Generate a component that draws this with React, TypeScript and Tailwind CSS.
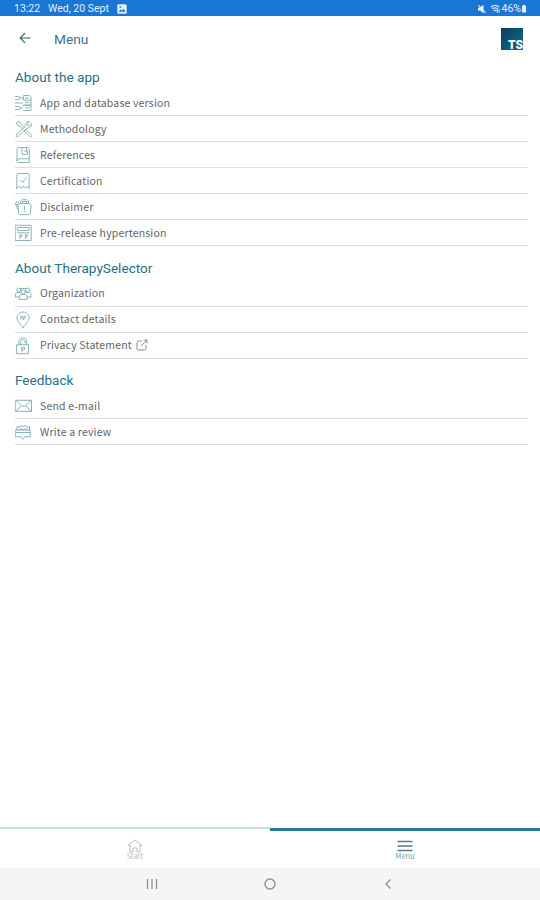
import type { ReactNode } from "react";

type MenuItem = {
  label: string;
  icon: ReactNode;
  external?: boolean;
};

type Section = {
  title: string;
  items: MenuItem[];
};

function Icon({ children }: { children: ReactNode }) {
  return (
    <svg
      viewBox="0 0 18 18"
      className="h-[18px] w-[18px] shrink-0"
      fill="none"
      stroke="#86b0b7"
      strokeWidth="0.95"
      strokeLinecap="round"
      strokeLinejoin="round"
    >
      {children}
    </svg>
  );
}

const sections: Section[] = [
  {
    title: "About the app",
    items: [
      {
        label: "App and database version",
        icon: (
          <Icon>
            <path d="M.5 2.500h3c1 0 1.500.5 1.500 1.500S4.500 5.500 3.500 5.500h-3M5 4h2.500M.5 9H7.500M.5 15.500h3c1 0 1.500-.5 1.500-1.500s-.5-1.500-1.500-1.500h-3M5 14h2.500" />
            <path d="M14 1.500H8.500v4.700H16V3.500zM16 6.200v5H8.500M8.500 11.200H16v5.300H8.500M10.500 4h3M10.500 8.700h3.500M10.500 13.800h3.500" />
          </Icon>
        ),
      },
      {
        label: "Methodology",
        icon: (
          <Icon>
            <path d="M1.300 3 3 1.300l3 1.800.3 1.600 3 3M4.700 6.300 3.100 6 1.300 3M4.700 6.300l3 3M10.200 10.800l1-1 5.200 5.100c1 1-.6 2.600-1.600 1.600L9.600 11.400z" />
            <path d="m1.500 14.800 8.800-8.300c-.5-2.700 1.400-5.200 4.300-4.800l-2.200 2.200.4 1.500 1.600.4L16.700 3.600c.4 2.800-2 4.900-4.700 4.300l-8.800 8.600c-1.300 1-2.800-.5-1.700-1.700z" />
          </Icon>
        ),
      },
      {
        label: "References",
        icon: (
          <Icon>
            <path d="M7 1.500H4c-1.300 0-2 .8-2 2v11c0 1.300.8 2 2 2h10.300v-3.700H4c-1.200 0-2 .6-2 1.700M14.300 12.800V3.300c0-1.200-.6-1.800-1.600-1.800h-1.500" />
            <path d="M7 1.500h4.500V5M7 1.500v6.700h5.500V5H9.500" />
          </Icon>
        ),
      },
      {
        label: "Certification",
        icon: (
          <Icon>
            <path d="M2 2.500c0-.6.4-1 1-1h10.200c.6 0 1 .4 1 1v14L12 14.400 10 16l-1.900-1.700L6.200 16l-2-1.600L2 16.500z" />
            <path d="m5.700 8.300 2 2 3.800-4.500" />
          </Icon>
        ),
      },
      {
        label: "Disclaimer",
        icon: (
          <Icon>
            <path d="M4.200 5.500h10.300l1.500 2-.6 8.200-1.500 1H5.200l-1.500-1-.6-8.200z" />
            <path d="M5.500 5.300V3.200l2-1.500h4l2 1.500v2.100M7.500 5V3.500h4V5M3.500 4H1.500L.5 6l2.200 5M1 6.500h2M9.500 8.500v3.300M9.500 13.800v.2" />
          </Icon>
        ),
      },
      {
        label: "Pre-release hypertension",
        icon: (
          <Icon>
            <path d="M.6 1.300h15.600v15.200H.6zM2.800 3.500h11.200v3H2.800zM2.800 8.800H14" />
            <path d="M5 11v3.500M5 11h2.500M5 12.700h2M10.500 11v3.500M10.500 11H13M10.500 12.700h2" />
          </Icon>
        ),
      },
    ],
  },
  {
    title: "About TherapySelector",
    items: [
      {
        label: "Organization",
        icon: (
          <Icon>
            <circle cx="3.700" cy="5" r="2" />
            <circle cx="12.700" cy="5" r="2" />
            <circle cx="8.200" cy="7" r="2.100" />
            <path d="M4.200 14v-2c0-1.500 1-2.500 2.500-2.500h3c1.500 0 2.500 1 2.500 2.500v2zM4 12H.5V9.500C.5 8 1.500 7.500 2.700 7.500h2.500M12.500 12h3.500V9.500c0-1.500-1-2-2.500-2H11M5.200 3.500h6" />
          </Icon>
        ),
      },
      {
        label: "Contact details",
        icon: (
          <Icon>
            <path d="M8 16.700C6 13.500 2 10.500 2 6.800 2 3.500 4.600 1 8 1s6 2.500 6 5.800c0 3.700-4 6.700-6 9.900z" />
            <path d="M5.800 5.500v2.700M5.800 5.500 8 6.300v2M8 6.300l2.300-1.500v2.500L8 8.300" />
          </Icon>
        ),
      },
      {
        label: "Privacy Statement",
        external: true,
        icon: (
          <Icon>
            <path d="M2 7.700h11.500v9H2zM3.800 7.700V4.500C3.800 2.200 5.500.7 7.700.7s3.900 1.500 3.900 3.800v1.200H9.800V4.500c0-1.300-.8-2-2.100-2s-2 .7-2 2v3.200M11.600 5.700v2" />
            <path d="M7 10.300h2.500v2H7zM7 12.300v2.200" />
          </Icon>
        ),
      },
    ],
  },
  {
    title: "Feedback",
    items: [
      {
        label: "Send e-mail",
        icon: (
          <Icon>
            <path d="M.6 3.300h15.900v11H.6zM.8 3.500l6.300 5.700h2.800l6.400-5.700M.8 14.100l5.500-5M16.300 14.100l-5.500-5" />
          </Icon>
        ),
      },
      {
        label: "Write a review",
        icon: (
          <Icon>
            <path d="M.6 7h14.600v6.800H10L8 16.200l-2-2.400H.6zM.6 9.500h14.600M2 7V3.500l2.500 1L6 2.500l2 1.300 2.500-1.300L12 4.500l2.500-1V7M4.200 7 6 5.500 8 7l2.200-1.500L12.200 7" />
          </Icon>
        ),
      },
    ],
  },
];

function StatusBar() {
  return (
    <div className="flex h-4 items-center bg-[#1976d5] pt-px pr-[13px] pl-[14px] font-[Roboto,sans-serif] text-[10.5px] leading-4 text-[#e4f0ff]">
      <span className="w-[34px]">13:22</span>
      <span className="w-[69px] whitespace-nowrap">Wed, 20 Sept</span>
      <svg viewBox="0 0 10 10" className="h-[10px] w-[10px]" fill="none">
        <rect x=".3" y=".3" width="9.400" height="9.400" rx="1.300" fill="#e4f0ff" />
        <path d="m1.700 7.800 2-2.500 1.500 1.500 1.500-2 1.800 3zM2.500 2.500h2v1.300h-2z" fill="#1976d5" />
      </svg>
      <div className="ml-auto flex items-center">
        <svg viewBox="0 0 10 10" className="mr-[3px] h-[10px] w-[10px]">
          <path d="M1 3.500h2L6.500.7v8.600L3 6.500H1z" fill="#e4f0ff" />
          <path d="m1.500 1 7 7.800" stroke="#e4f0ff" strokeWidth="1.100" />
        </svg>
        <svg viewBox="0 0 12 10" className="mr-px h-[10px] w-[11px]" fill="none" stroke="#d2e5fb" strokeWidth="1.300">
          <path d="M1 3c2.800-2.300 6.500-2.300 9 0M2.500 5c2-1.600 4.300-1.600 6 0M4 7c1-.8 2-.8 3 0M8 5.500v3.700M10 5v3.700" />
        </svg>
        <span>46%</span>
        <svg viewBox="0 0 6 10" className="h-[9px] w-[6px]" fill="#e4f0ff">
          <path d="M2 .8h2V2h1.300v7.500H.7V2H2z" />
        </svg>
      </div>
    </div>
  );
}

function Header() {
  return (
    <header className="flex h-[46px] items-center pr-[17px] pl-[19px]">
      <svg viewBox="0 0 12 12" className="h-3 w-3 -translate-y-px" fill="none" stroke="#35606e" strokeWidth="1.200">
        <path d="M11.500 6H1.200M6 1.200 1.200 6 6 10.800" />
      </svg>
      <h1 className="mt-[2px] ml-[23px] font-[Roboto,sans-serif] text-[13.700px] leading-none text-[#3d7285]">Menu</h1>
      <div className="ml-auto flex h-[22px] w-[22px] items-end justify-end bg-linear-to-br from-[#0d3c5c] to-[#087091]">
        <span className="font-[Roboto,sans-serif] text-[12px] leading-[10px] font-black text-white">TS</span>
      </div>
    </header>
  );
}

function MenuRow({ item }: { item: MenuItem }) {
  return (
    <li className="flex h-[26px] items-center border-b border-[#dcdfe0] pt-px">
      {item.icon}
      <span className="ml-[7px] font-['Noto_Sans_CJK_SC',sans-serif] text-[10.500px] leading-none tracking-[0.17px] text-[#646464]">
        {item.label}
      </span>
      {item.external && (
        <svg viewBox="0 0 12 12" className="ml-1 h-3 w-3 -translate-y-px" fill="none" stroke="#888" strokeWidth="1">
          <path d="M6 2H2.500C1.500 2 1 2.500 1 3.500v6c0 1 .5 1.500 1.500 1.500h6c1 0 1.500-.5 1.500-1.500V6M5 7l6-6M7.500 1H11v3.500" />
        </svg>
      )}
    </li>
  );
}

function BottomNav() {
  return (
    <nav className="flex h-[41px] items-start font-['Noto_Sans_CJK_SC',sans-serif] text-[7.500px] leading-none">
      <div className="flex w-1/2 flex-col items-center border-t-2 border-[#c8dfe3] pt-[10px] text-[#c2c2c2]">
        <svg viewBox="0 0 16 14" className="h-[14px] w-4" fill="none" stroke="#b5b5b5" strokeWidth="0.900">
          <path d="M3 6.500H1L8 1l7 5.500h-2V13h-3V9H6v4H3z" />
        </svg>
        <span className="-mt-px">Start</span>
      </div>
      <div className="mt-px flex w-1/2 flex-col items-center border-t-[3px] border-[#237b98] pt-[9px] text-[#71a2b0]">
        <svg viewBox="0 0 16 13" className="h-[13px] w-4" stroke="#527f8e" strokeWidth="1.500">
          <path d="M.5 1.500h15M.5 6h15M.5 10.500h15" />
        </svg>
        <span className="-mt-px">Menu</span>
      </div>
    </nav>
  );
}

function SystemBar() {
  return (
    <div className="flex h-8 items-center justify-center gap-[106px] bg-[#f5f5f5]">
      <svg viewBox="0 0 12 12" className="h-3 w-3" stroke="#929292" strokeWidth="1.300">
        <path d="M1.500 1v10M6 1v10M10.500 1v10" />
      </svg>
      <svg viewBox="0 0 12 12" className="h-3 w-3" fill="none" stroke="#929292" strokeWidth="1.400">
        <circle cx="6" cy="6" r="5" />
      </svg>
      <svg viewBox="0 0 12 12" className="h-3 w-3" fill="none" stroke="#929292" strokeWidth="1.400">
        <path d="M8.500 1.500 4 6l4.500 4.500" />
      </svg>
    </div>
  );
}

export default function App() {
  return (
    <div className="flex h-[900px] w-[540px] flex-col overflow-hidden bg-white">
      <StatusBar />
      <Header />
      <main className="-mt-[6px] flex-1 pr-3 pl-[15px]">
        {sections.map((section) => (
          <section key={section.title}>
            <h2 className="flex h-[34.300px] items-end pb-[5px] font-[Roboto,sans-serif] text-[13.600px] leading-[15px] text-[#26708a]">
              {section.title}
            </h2>
            <ul>
              {section.items.map((item) => (
                <MenuRow key={item.label} item={item} />
              ))}
            </ul>
          </section>
        ))}
      </main>
      <BottomNav />
      <SystemBar />
    </div>
  );
}
